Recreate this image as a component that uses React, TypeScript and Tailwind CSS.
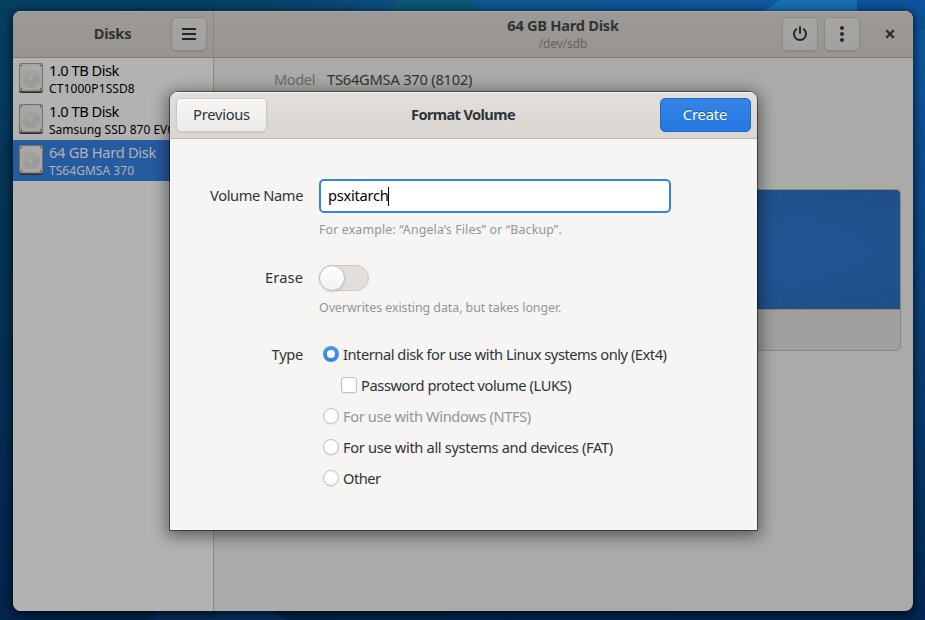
import React from "react";

function DriveIcon() {
  return (
    <svg className="h-[30px] w-6 shrink-0" viewBox="0 0 24 30">
      <rect x=".2" y="1" width="23.6" height="29" rx="2" fill="#2c2c2e" />
      <rect x=".5" y=".5" width="23" height="27.5" rx="1.6" fill="#a2a29c" stroke="#72726e" />
      <path d="M4 2.5H20L22 6V21L19 26H5L2 21V6Z" fill="#a6a6a2" stroke="#b0b0ad" strokeWidth=".6" />
      <path d="M3 10L13 3H21V9L3 19Z" fill="#b0b0ae" opacity=".5" />
      <circle cx="12" cy="16" r="9.3" fill="#9d9b97" stroke="#a9a7a4" strokeWidth=".6" />
      <path d="M3 16A9 9 0 0 1 20 11L12 16Z" fill="#a5a5a2" opacity=".6" />
      <circle cx="12" cy="16" r="1.2" fill="#b0b0ac" />
      <path d="M8 26Q15 27 20 21" fill="none" stroke="#b0b0ac" strokeWidth=".8" />
      <g fill="#41413f">
        <circle cx="2.4" cy="2.5" r=".75" />
        <circle cx="21.6" cy="2.5" r=".75" />
        <circle cx="2.4" cy="26" r=".75" />
        <circle cx="21.6" cy="26" r=".75" />
      </g>
    </svg>
  );
}

function Wallpaper() {
  return (
    <svg className="absolute inset-0 h-full w-full" viewBox="0 0 925 620" preserveAspectRatio="none">
      <defs>
        <linearGradient id="top"><stop stopColor="#053a5a" /><stop offset=".3" stopColor="#08426b" /><stop offset=".5" stopColor="#0e568f" /><stop offset="1" stopColor="#1059a5" /></linearGradient>
        <linearGradient id="down" x2="0" y2="1"><stop stopColor="#04213f" stopOpacity="0" /><stop offset=".5" stopColor="#04254b" stopOpacity=".45" /><stop offset="1" stopColor="#03224a" stopOpacity=".93" /></linearGradient>
      </defs>
      <rect width="925" height="620" fill="url(#top)" />
      <path d="M400 0H474V14H385Z" fill="#0c5878" />
      <path d="M780 0H857V14H760Z" fill="#1671b3" />
      <path d="M857 0H925V30H857Z" fill="#0d529b" />
      <path d="M0 0H130L0 150Z" fill="#064469" opacity=".5" />
      <rect width="925" height="620" fill="url(#down)" />
      <path d="M150 620L215 560V620Z" fill="#062d5b" />
      <path d="M215 600H255L285 620H215Z" fill="#09305f" />
    </svg>
  );
}

const dimButton =
  "flex h-[34px] items-center justify-center rounded-[5px] border border-[#8c8884] bg-linear-to-b from-[#a6a5a3] to-[#a2a19f] shadow-[0_1px_1px_rgba(0,0,0,.1)]";

function Disk({ name, model, selected, nameClass, modelClass }: { name: string; model: string; selected?: boolean; nameClass: string; modelClass: string }) {
  return (
    <div className={"flex h-[41px] items-center gap-1.5 overflow-hidden pl-1.5 whitespace-nowrap " + (selected ? "bg-[#255ba1] text-[#b3b3b3]" : "text-black")}>
      <div className="-mt-px"><DriveIcon /></div>
      <div className="flex flex-col">
        <span className={"text-[14.67px] leading-[19px] " + nameClass}>{name}</span>
        <span className={"pt-px text-[12px] leading-4 " + modelClass}>{model}</span>
      </div>
    </div>
  );
}

function Radio({ label, checked, disabled, labelClass }: { label: string; checked?: boolean; disabled?: boolean; labelClass: string }) {
  return (
    <div className="flex h-[31px] items-center gap-1 pl-1 whitespace-nowrap">
      {checked ? (
        <span className="flex size-4 shrink-0 items-center justify-center rounded-full bg-linear-to-b from-[#5095e8] to-[#3584e4]"><span className="size-2 rounded-full bg-white" /></span>
      ) : (
        <span className="size-4 shrink-0 rounded-full border border-[#c3bfba] bg-white shadow-[0_1px_1px_rgba(0,0,0,.06)]" />
      )}
      <span className={labelClass + (disabled ? " text-[#929595]" : "")}>{label}</span>
    </div>
  );
}

export default function App() {
  return (
    <div className="relative h-[620px] w-[925px] overflow-hidden font-['Noto_Sans',sans-serif] text-[14.67px] text-[#2e3436]">
      <Wallpaper />
      <main className="absolute top-[11px] left-[13px] flex h-[600px] w-[900px] flex-col overflow-hidden rounded-lg bg-[#aaaaa8] shadow-[0_2px_8px_2px_rgba(0,0,0,.6)]">
        <header className="flex h-[47px] shrink-0 border-b border-[#817c77] bg-linear-to-b from-[#9d9996] to-[#98948f] shadow-[inset_0_1px_#aaa7a5]">
          <div className="flex w-[201px] items-center border-r border-[#88847f] pr-1.5">
            <span className="grow pb-0.5 pl-[41px] text-center font-bold tracking-[-0.3px]">Disks</span>
            <button className={dimButton + " w-9"}>
              <svg width="16" height="16" viewBox="0 0 16 16"><path d="M1 3H15M1 8H15M1 13H15" stroke="#202628" strokeWidth="2" /></svg>
            </button>
          </div>
          <div className="flex grow items-center">
            <div className="ml-[130px] flex grow flex-col items-center">
              <span className="leading-[19px] font-bold tracking-[-0.28px]">64 GB Hard Disk</span>
              <span className="pt-px text-[12px] leading-4 tracking-[-0.1px] text-[#666563]">/dev/sdb</span>
            </div>
            <div className="flex items-center gap-[6px] pr-[15px]">
              <button className={dimButton + " w-9"}>
                <svg width="16" height="16" viewBox="0 0 16 16" fill="none" stroke="#242a2c" strokeWidth="2" strokeLinecap="round"><path d="M8 1V7M4.3 3.3A6 6 0 1 0 11.7 3.3" /></svg>
              </button>
              <button className={dimButton + " w-9"}>
                <svg width="16" height="16" viewBox="0 0 16 16" fill="#242a2c"><circle cx="8" cy="2" r="2" /><circle cx="8" cy="8" r="2" /><circle cx="8" cy="14" r="2" /></svg>
              </button>
              <svg className="ml-4" width="16" height="16" viewBox="0 0 16 16"><path d="M4.3 4.3L11.7 11.7M11.7 4.3L4.3 11.7" stroke="#242a2c" strokeWidth="2.2" /></svg>
            </div>
          </div>
        </header>
        <div className="flex min-h-0 grow">
          <aside className="w-[201px] shrink-0 border-r border-[#8a8a88] bg-[#b2b2b2]">
            <Disk name="1.0 TB Disk" model="CT1000P1SSD8" nameClass="tracking-[-0.5px]" modelClass="tracking-[0.1px]" />
            <Disk name="1.0 TB Disk" model="Samsung SSD 870 EVO" nameClass="tracking-[-0.5px]" modelClass="tracking-[0px]" />
            <Disk name="64 GB Hard Disk" model="TS64GMSA 370" selected nameClass="tracking-[-0.3px]" modelClass="tracking-[0.04px]" />
          </aside>
          <section className="flex grow flex-col px-3 pt-[11px]">
            <div className="flex gap-3 pl-12 leading-5">
              <span className="tracking-[-0.45px] text-[#686b6b]">Model</span>
              <span className="tracking-[-0.22px]">TS64GMSA 370 (8102)</span>
            </div>
            <div className="mt-[100px] flex h-[162px] flex-col overflow-hidden rounded-[5px] border border-[#8b8883] bg-[#a09f9d]">
              <div className="h-[120px] border-b border-[#8b8883] bg-[radial-gradient(ellipse_at_center,#24599e,#204f87)]" />
            </div>
          </section>
        </div>
      </main>
      <section className="absolute top-[92px] left-[170px] flex h-[438px] w-[587px] flex-col overflow-hidden rounded-t-lg bg-[#f6f5f4] shadow-[0_0_0_1px_rgba(0,0,0,.45),0_3px_16px_3px_rgba(0,0,0,.48)]">
        <header className="flex h-[47px] shrink-0 items-center justify-between border-b border-[#bfb8b1] bg-linear-to-b from-[#e1dedb] to-[#dad6d2] px-1.5 shadow-[inset_0_1px_#f8f7f6]">
          <button className="h-[34px] w-[91px] rounded-[5px] border border-[#cdc7c2] bg-linear-to-b from-[#f6f5f4] to-[#edebe9] pb-0.5 tracking-[-0.25px] shadow-[0_1px_2px_rgba(0,0,0,.08),inset_0_1px_white]">Previous</button>
          <span className="pr-px pb-0.5 font-bold tracking-[-0.64px]">Format Volume</span>
          <button className="h-[34px] w-[91px] rounded-[5px] border border-[#1b6acb] bg-linear-to-b from-[#3584e4] to-[#2379e2] pr-px pb-0.5 tracking-[-0.1px] text-white [text-shadow:0_-1px_rgba(0,0,0,.35)]">Create</button>
        </header>
        <div className="grid grid-cols-[133px_352px] gap-x-4 pt-10">
          <label className="pt-1.5 text-right leading-5 tracking-[-0.4px]">Volume Name</label>
          <div>
            <div className="flex h-[34px] items-center rounded-[5px] border-2 border-[#3584e4] bg-white pl-[7px] text-black">
              <span className="pb-0.5 tracking-[-0.28px]">psxitarch</span><span className="h-[19px] w-px bg-black" />
            </div>
            <p className="mt-2 text-[12.4px] leading-[18px] tracking-[0.13px] text-[#929595]">For example: “Angela’s Files” or “Backup”.</p>
          </div>
          <label className="pt-[28px] text-right leading-5 tracking-[0.1px]">Erase</label>
          <div className="pt-[26px]">
            <div className="h-[26px] w-[50px] rounded-full border border-[#cdc7c2] bg-[#e1dedb]"><div className="-mt-px -ml-px size-[26px] rounded-full border border-[#c4bdb6] bg-linear-to-b from-white to-[#f4f3f2] shadow-[0_1px_2px_rgba(0,0,0,.12)]" /></div>
            <p className="mt-2 text-[12.4px] leading-[18px] tracking-[-0.05px] text-[#929595]">Overwrites existing data, but takes longer.</p>
          </div>
          <label className="pt-[27px] text-right leading-5 tracking-[-0.3px]">Type</label>
          <div className="pt-[21px]">
            <Radio label="Internal disk for use with Linux systems only (Ext4)" checked labelClass="tracking-[-0.46px]" />
            <div className="flex h-[31px] items-center gap-1 pl-[22px]">
              <span className="size-4 rounded-[3px] border border-[#c3bfba] bg-white shadow-[0_1px_1px_rgba(0,0,0,.06)]" />
              <span className="tracking-[-0.41px]">Password protect volume (LUKS)</span>
            </div>
            <Radio label="For use with Windows (NTFS)" disabled labelClass="tracking-[-0.38px]" />
            <Radio label="For use with all systems and devices (FAT)" labelClass="tracking-[-0.34px]" />
            <Radio label="Other" labelClass="tracking-[-0.5px]" />
          </div>
        </div>
      </section>
    </div>
  );
}
